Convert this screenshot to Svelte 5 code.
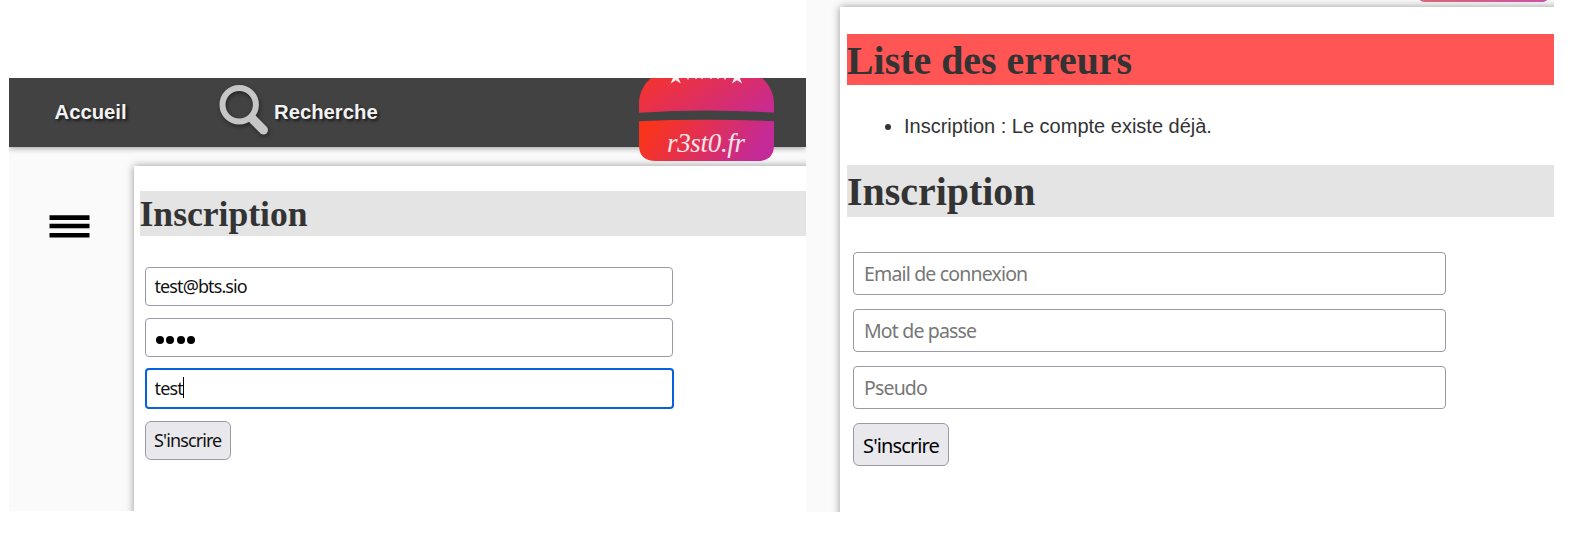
<script>
  const placeholders = ['Email de connexion', 'Mot de passe', 'Pseudo'];
  const star = 'M0 -5.4 L1.5 -1.7 L5.2 -1.7 L2.3 .8 L4.1 5 L0 2.5 L-4.1 5 L-2.3 .8 L-5.2 -1.7 L-1.5 -1.7Z';
</script>

<main>
  <section class="panel left">
    <header>
      <a class="home" href="#accueil">Accueil</a>
      <a class="search" href="#recherche">
        <svg width="54" height="56" viewBox="0 0 54 56">
          <circle cx="22.2" cy="22.7" r="16.7" fill="none" stroke="#c6c6c6" stroke-width="6" />
          <path d="M36 37.5L46.5 48" stroke="#c6c6c6" stroke-width="9" stroke-linecap="round" />
        </svg>
        <span>Recherche</span>
      </a>
      <svg class="logo" width="136" height="84" viewBox="0 0 136 84">
        <defs>
          <linearGradient id="top" gradientUnits="userSpaceOnUse" x1="38" y1="-36" x2="103" y2="60">
            <stop offset="0" stop-color="#fb3420" /><stop offset="1" stop-color="#c42a9a" />
          </linearGradient>
          <linearGradient id="bottom" gradientUnits="userSpaceOnUse" x1="24" y1="28" x2="112" y2="86">
            <stop offset="0" stop-color="#fa341c" /><stop offset="1" stop-color="#c42a98" />
          </linearGradient>
        </defs>
        <path d="M0 34.7V26C0 15 5 6 12 0H123C130 6 135 15 135 26V34.7Q67.5 30.5 0 34.7Z" fill="url(#top)" />
        <path d="M0 43.2Q67.5 40.5 135 43.2V67Q135 83 118 83H17Q0 83 0 67Z" fill="url(#bottom)" />
        <path d={star} fill="#fff0f0" transform="translate(36.7 -.8) scale(1.25)" />
        <path d={star} fill="#fff0f0" transform="translate(98 -.8) scale(1.25)" />
        <path d="M49 0v1.5M57 0v1M63 0v1M72 0v1M79 0v1M86 0v1.5" stroke="#f3b6c4" stroke-width="2" />
        <text x="28" y="73.5" textLength="78" lengthAdjust="spacing">r3st0.fr</text>
      </svg>
    </header>
    <div class="body">
      <aside>
        <svg width="41" height="24" viewBox="0 0 41 24">
          <path d="M0.5 2.6H40.5M0.5 11H40.5M0.5 20.2H40.5" stroke="#000" stroke-width="4.6" />
        </svg>
      </aside>
      <article class="card">
        <h1>Inscription</h1>
        <form>
          <div class="field"><span class="mail">test@bts.sio</span></div>
          <div class="field"><span class="dots"><i></i><i></i><i></i><i></i></span></div>
          <div class="field focus"><span class="typed">test</span><b class="caret"></b></div>
          <button type="button">S'inscrire</button>
        </form>
      </article>
    </div>
  </section>

  <section class="panel right">
    <div class="logo-edge"></div>
    <article class="card">
      <h1 class="error">Liste des erreurs</h1>
      <ul><li>Inscription : Le compte existe déjà.</li></ul>
      <h1>Inscription</h1>
      <form>
        {#each placeholders as text}
          <div class="field"><span class="ph">{text}</span></div>
        {/each}
        <button type="button">S'inscrire</button>
      </form>
    </article>
  </section>
</main>

<style>
  :global(body) { margin: 0; background: #fff; }
  main { display: flex; width: 1578px; height: 552px; overflow: hidden; box-sizing: border-box; padding-left: 9px; }
  .panel { box-sizing: border-box; background: #fafafa; overflow: hidden; position: relative; flex: none; }
  .left { width: 797px; height: 433px; margin-top: 78px; }
  .right { width: 748px; height: 512.4px; padding: 6.5px 0 0 34.4px; }
  header { position: relative; z-index: 2; height: 69.4px; background: #424242; box-shadow: 0 1px 6px rgba(0,0,0,.4); display: flex; }
  header a { color: #f2f2f2; text-decoration: none; font: bold 20.3px/24px "Liberation Sans", Arial, sans-serif; text-shadow: 2px 2px 3px #161616; }
  .home { margin: 22px 0 0 45.5px; width: 160.5px; }
  .search { display: flex; height: 60px; width: 420px; }
  .search svg { margin: 4px 0 0 2px; flex: none; filter: drop-shadow(1px 2px 2px #252525); }
  .search span { margin: 22px 0 0 3px; }
  .logo { flex: none; margin-left: 4px; display: block; }
  .logo text { fill: #fde5e5; font: italic 27px "Liberation Serif", serif; }
  .body { display: flex; height: 364px; }
  aside { width: 125px; flex: none; }
  aside svg { display: block; margin: 67.6px 0 0 40px; }
  .card { background: #fff; box-shadow: 0 0 8px rgba(0,0,0,.4); box-sizing: border-box; height: 600px; }
  .left .card { width: 700px; flex: none; margin-top: 18.6px; padding: 25px 0 0 5.5px; }
  .right .card { width: 760px; padding: 27.5px 0 0 6.6px; }
  h1 { margin: 0; background: #e4e4e4; color: #333; font: bold 35.6px/46px "Liberation Serif", "Times New Roman", serif; height: 45px; }
  .right h1 { font-size: 39.9px; line-height: 54px; height: 52px; }
  .right h1.error { background: #f55; height: 51px; line-height: 54px; }
  ul { margin: 0; padding: 30px 0 0 57px; height: 50px; color: #333; font: 20px/23px "Liberation Sans", Arial, sans-serif; }
  li::marker { font-size: 20px; }
  form { display: flex; flex-direction: column; align-items: flex-start; font-family: "Noto Sans", sans-serif; }
  .left form { padding: 31px 0 0 5.5px; }
  .right form { padding: 34.5px 0 0 6px; }
  .field { box-sizing: border-box; display: flex; align-items: center; border: 1.4px solid #9a9aa7; border-radius: 4px; background: #fff; white-space: nowrap; }
  .left .field { width: 528px; height: 39px; margin-bottom: 12px; padding: 0 0 0 8.5px; font-size: 18px; color: #111; }
  .left .field.focus { height: 41px; width: 529px; border: 2px solid #0561df; margin: -1px 0 12px; padding-left: 7.5px; padding-bottom: 1px; }
  .right .field { width: 593px; height: 43.5px; margin-bottom: 13.6px; padding-left: 10px; font-size: 19.5px; color: #777; }
  .mail { letter-spacing: -.9px; }
  .typed { letter-spacing: -.8px; }
  .ph { letter-spacing: -.83px; }
  .dots { display: flex; gap: 2.3px; padding: 5px 0 0 1.5px; }
  .dots i { width: 8px; height: 8px; border-radius: 50%; background: #000; }
  .caret { width: 1px; height: 21px; background: #000; }
  button { box-sizing: border-box; border: 1.4px solid #9a9aa7; border-radius: 6px; background: #e9e9ed; color: #111; font-family: inherit; padding: 0; white-space: nowrap; }
  .left button { width: 85.5px; height: 39px; font-size: 18px; letter-spacing: -.9px; padding-bottom: 1px; }
  .right button { width: 96px; height: 43.5px; font-size: 20px; letter-spacing: -.9px; color: #000; padding-top: 2px; }
  .logo-edge { position: absolute; left: 613px; top: -10px; width: 129px; height: 11.5px; border-radius: 0 0 5px 5px; background: linear-gradient(90deg, #dc6675, #c952a8); }
</style>
